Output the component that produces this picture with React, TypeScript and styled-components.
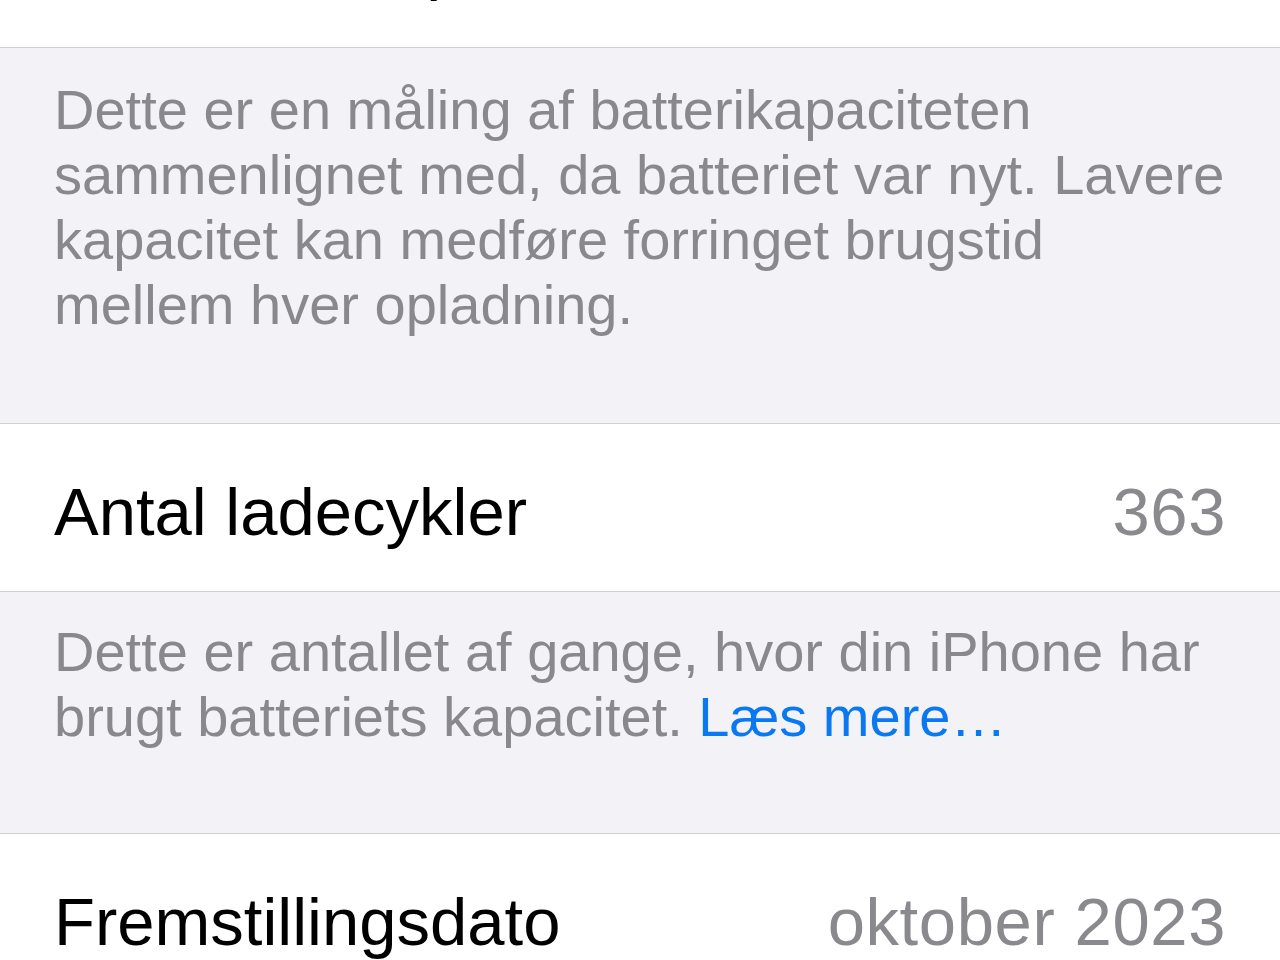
import React from "react";
import styled, { createGlobalStyle } from "styled-components";

const GlobalStyle = createGlobalStyle`
  html, body {
    margin: 0;
    padding: 0;
    background: #ffffff;
  }
  body {
    font-family: "Liberation Sans", Arial, sans-serif;
    -webkit-font-smoothing: antialiased;
  }
  * { box-sizing: border-box; }
`;

const Screen = styled.div`
  width: 1280px;
  height: 960px;
  overflow: hidden;
  background: #f2f2f7;
  display: flex;
  flex-direction: column;
`;

/* A settings cell: label on the left, value on the right, hairlines above and below */
const Row = styled.div<{ $offset?: number; $lift?: number }>`
  flex: none;
  display: flex;
  align-items: center;
  justify-content: space-between;
  min-height: 169px;
  padding: 8px 54px ${(p) => 1 + (p.$lift ?? 0)}px;
  margin-top: ${(p) => (p.$offset ? `${p.$offset}px` : "0")};
  background: #ffffff;
  border-top: 1px solid #cfcfd3;
  border-bottom: 1px solid #cfcfd3;
`;

const Label = styled.span`
  font-size: 67px;
  color: #000000;
  white-space: nowrap;
`;

const Value = styled.span`
  font-size: 67px;
  letter-spacing: 0.6px;
  color: #8a8a8e;
  white-space: nowrap;
`;

/* Explanatory footer text under a cell */
const Footer = styled.p<{ $top: number; $bottom: number }>`
  flex: none;
  margin: 0;
  padding: ${(p) => p.$top}px 54px ${(p) => p.$bottom}px;
  font-size: 56px;
  line-height: 65px;
  color: #88888d;
`;

const Link = styled.a`
  color: #0a78f0;
  text-decoration: none;
`;

export default function App() {
  return (
    <>
      <GlobalStyle />
      <Screen>
        <Row $offset={-121} $lift={8}>
          <Label>Maksimal kapacitet</Label>
        </Row>
        <Footer $top={29} $bottom={86}>
          Dette er en måling af batterikapaciteten sammenlignet med, da
          batteriet var nyt. Lavere kapacitet kan medføre forringet brugstid
          mellem hver opladning.
        </Footer>
        <Row>
          <Label>Antal ladecykler</Label>
          <Value>363</Value>
        </Row>
        <Footer $top={27} $bottom={84}>
          Dette er antallet af gange, hvor din iPhone har brugt batteriets
          kapacitet. <Link href="#">Læs mere…</Link>
        </Footer>
        <Row>
          <Label>Fremstillingsdato</Label>
          <Value>oktober 2023</Value>
        </Row>
      </Screen>
    </>
  );
}
